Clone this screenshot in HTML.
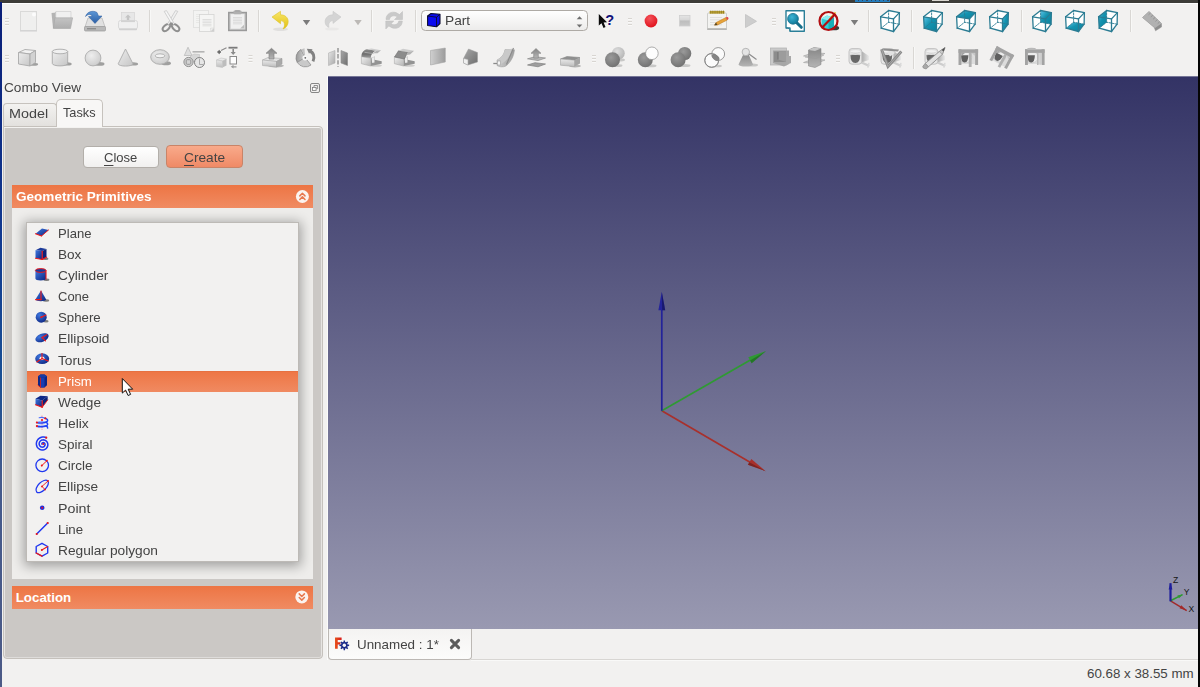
<!DOCTYPE html><html><head><meta charset="utf-8"><title>FreeCAD</title><style>
html,body{margin:0;padding:0;}
body{width:1200px;height:687px;overflow:hidden;background:#f2f1f0;position:relative;font-family:"Liberation Sans", sans-serif;font-size:13.33px;color:#444444;}
.abs{position:absolute;}
svg{position:absolute;overflow:visible;}
.t{position:absolute;white-space:nowrap;line-height:1;transform-origin:0 0;}
.t u{text-decoration-thickness:1px;text-underline-offset:2.5px;}
#view{left:328px;top:76px;width:870px;height:553px;background:linear-gradient(#333365,#9999b1);}
#panel{left:3px;top:126px;width:320px;height:533px;background:#cbc8c5;border:1px solid #c5c1bc;border-radius:1px 4px 4px 4px;box-sizing:border-box;box-shadow:inset 0 1px 0 #f3f2f0, inset -1px 0 0 #e6e4e2, inset 1px 0 0 #e6e4e2, inset 0 -1px 0 #dedcda;}
.hdr{left:12px;width:301px;height:23px;background:linear-gradient(#ed7544,#f08b62);}
#content{left:12px;top:208px;width:301px;height:371px;background:#eeedeb;overflow:hidden;}
#list{left:14px;top:14px;width:273px;height:340px;background:#f2f1f0;border:1px solid #bdbab6;box-sizing:border-box;box-shadow:0 2px 11px 2px rgba(0,0,0,.33);}
#sel{left:27px;top:371px;width:271px;height:21px;background:linear-gradient(#e26e3f 0,#ee7746 1.5px,#f08a61 100%);}
</style></head><body>
<div class="abs" style="left:0;top:0;width:1200px;height:4px;background:linear-gradient(#3d3c38 0,#3d3c38 2.5px,#a5a4a1 3px,#fefefe 3.5px,#f6f5f4 4px)"></div>
<div class="abs" style="left:855px;top:0;width:35px;height:1.2px;background:repeating-linear-gradient(90deg,#1e8de0 0,#1e8de0 3px,#2a4a6a 3px,#2a4a6a 4.2px);opacity:.8"></div><div class="abs" style="left:855px;top:1.3px;width:35px;height:.6px;background:#1e8de0;opacity:.8"></div>
<div class="abs" style="left:932px;top:0;width:17px;height:.9px;background:#d9d6d0"></div>
<div class="abs" style="left:0;top:2px;width:2px;height:685px;background:linear-gradient(#0a1e78,#123a90 35%,#1a5094 55%,#455a8c 70%,#4c5a86)"></div>
<div class="abs" style="left:1198px;top:0;width:2px;height:687px;background:#050505"></div>
<div class="abs" style="left:327px;top:76px;width:1px;height:584px;background:#fbfbfa"></div>
<div id="view" class="abs"></div>
<div class="abs" style="left:328px;top:76px;width:870px;height:1px;background:rgba(255,255,255,.33)"></div>
<svg style="left:0px;top:0px" width="1200" height="687" viewBox="0 0 1200 687"><line x1="661.8" y1="410.8" x2="751.339" y2="462.902" stroke="#a8302c" stroke-width="1.7"/><polygon points="765.6,471.2 747.9,464.834 751.32,458.957" fill="#a8302c"/><polygon points="765.6,471.2 747.9,464.834 749.409,462.241" fill="#5a1a18" opacity="0.55"/><line x1="661.8" y1="410.8" x2="751.689" y2="359.213" stroke="#2f9a33" stroke-width="1.7"/><polygon points="766,351 751.647,363.157 748.262,357.26" fill="#2f9a33"/><polygon points="766,351 751.647,363.157 750.154,360.555" fill="#1a5a1c" opacity="0.55"/><line x1="661.8" y1="410.8" x2="661.8" y2="308.3" stroke="#23239a" stroke-width="1.7"/><polygon points="661.8,291.8 665.2,310.3 658.4,310.3" fill="#23239a"/><polygon points="661.8,291.8 665.2,310.3 662.2,310.3" fill="#10104a" opacity="0.55"/></svg>
<svg style="left:0px;top:0px" width="1200" height="687" viewBox="0 0 1200 687"><line x1="1170.5" y1="600.8" x2="1186.7" y2="610.6" stroke="#a22a2a" stroke-width="1.5"/><polygon points="1186.7,610.6 1179.5,608.2 1181.3,605.3" fill="#a22a2a"/><line x1="1170.5" y1="600.8" x2="1182.5" y2="594.6" stroke="#2e9a32" stroke-width="1.6"/><polygon points="1182.8,594.4 1177.3,595.6 1179,598.3" fill="#2e9a32"/><line x1="1170.5" y1="601.3" x2="1170.5" y2="583.2" stroke="#1e1e9c" stroke-width="2.2"/><polygon points="1170.5,583 1168.6,589.5 1172.4,589.5" fill="#1e1e9c"/><text x="1172.9" y="582.9" font-family="Liberation Sans, sans-serif" font-size="8.6" fill="#161616">Z</text><text x="1183.7" y="594.8" font-family="Liberation Sans, sans-serif" font-size="8.6" fill="#161616">Y</text><text x="1188.6" y="611.6" font-family="Liberation Sans, sans-serif" font-size="8.6" fill="#161616">X</text></svg>
<svg style="left:0px;top:0px" width="1200" height="76" viewBox="0 0 1200 76"><defs>
<linearGradient id="gg" x1="0" y1="0" x2="0" y2="1"><stop offset="0" stop-color="#e9e9e9"/><stop offset="1" stop-color="#bdbdbd"/></linearGradient>
<linearGradient id="gg2" x1="0" y1="0" x2="1" y2="1"><stop offset="0" stop-color="#e6e6e6"/><stop offset="1" stop-color="#a9a9a9"/></linearGradient>
<linearGradient id="gdk" x1="0" y1="0" x2="1" y2="1"><stop offset="0" stop-color="#a8a8a8"/><stop offset="1" stop-color="#6e6e6e"/></linearGradient>
<linearGradient id="gteal" x1="0" y1="0" x2="1" y2="1"><stop offset="0" stop-color="#5cc4e6"/><stop offset="0.45" stop-color="#1493b0"/><stop offset="1" stop-color="#0b819c"/></linearGradient>
<radialGradient id="gsph" cx="0.4" cy="0.35" r="0.7"><stop offset="0" stop-color="#eeeeee"/><stop offset="1" stop-color="#cbcbcb"/></radialGradient>
<radialGradient id="gsphd" cx="0.4" cy="0.35" r="0.7"><stop offset="0" stop-color="#9a9a9a"/><stop offset="1" stop-color="#707070"/></radialGradient>
<radialGradient id="gsphl" cx="0.4" cy="0.35" r="0.7"><stop offset="0" stop-color="#dedede"/><stop offset="1" stop-color="#b4b4b4"/></radialGradient>
<radialGradient id="gred" cx="0.4" cy="0.3" r="0.7"><stop offset="0" stop-color="#f4525a"/><stop offset="1" stop-color="#e0141e"/></radialGradient>
<radialGradient id="gmag" cx="0.4" cy="0.35" r="0.7"><stop offset="0" stop-color="#3fb4d4"/><stop offset="1" stop-color="#0d7797"/></radialGradient>
<linearGradient id="gblue" x1="0" y1="0" x2="0" y2="1"><stop offset="0" stop-color="#5d97d6"/><stop offset="1" stop-color="#2c5fa5"/></linearGradient>
<linearGradient id="gyel" x1="0" y1="0" x2="0" y2="1"><stop offset="0" stop-color="#f8e66a"/><stop offset="1" stop-color="#e2c010"/></linearGradient>
<filter id="b1" x="-20%" y="-20%" width="140%" height="140%"><feGaussianBlur stdDeviation="0.6"/></filter>
</defs><defs>
<linearGradient id="gcombo" x1="0" y1="0" x2="0" y2="1"><stop offset="0" stop-color="#ffffff"/><stop offset="1" stop-color="#ecebea"/></linearGradient>
<linearGradient id="gstop" x1="0" y1="0" x2="0" y2="1"><stop offset="0" stop-color="#e4e4e4"/><stop offset="0.45" stop-color="#d6d6d6"/><stop offset="0.5" stop-color="#bdbdbd"/><stop offset="1" stop-color="#c8c8c8"/></linearGradient>
<linearGradient id="gdkv" x1="0" y1="0" x2="0" y2="1"><stop offset="0" stop-color="#858585"/><stop offset="1" stop-color="#b5b5b5"/></linearGradient>
<linearGradient id="gfold" x1="0" y1="0" x2="0" y2="1"><stop offset="0" stop-color="#c4c4c4"/><stop offset="1" stop-color="#adadad"/></linearGradient>
<linearGradient id="gface" x1="0" y1="0" x2="1" y2="1"><stop offset="0" stop-color="#efefef"/><stop offset="1" stop-color="#b4b4b4"/></linearGradient>
<linearGradient id="gband" x1="0" y1="0" x2="0" y2="1"><stop offset="0" stop-color="#8a8a8a"/><stop offset="0.55" stop-color="#6f6f6f"/><stop offset="1" stop-color="#a0a0a0"/></linearGradient>
<linearGradient id="gpie" x1="0" y1="0" x2="1" y2="0"><stop offset="0" stop-color="#9a9a9a"/><stop offset="1" stop-color="#cfcfcf"/></linearGradient>
<linearGradient id="gg2l" x1="0" y1="0" x2="1" y2="1"><stop offset="0" stop-color="#ededed"/><stop offset="1" stop-color="#c6c6c6"/></linearGradient>
<linearGradient id="gcone" x1="0" y1="0" x2="1" y2="0"><stop offset="0" stop-color="#a9a9a9"/><stop offset="1" stop-color="#e9e9e9"/></linearGradient>
<linearGradient id="gdk2" x1="0" y1="0" x2="1" y2="0"><stop offset="0" stop-color="#cfcfcf"/><stop offset="1" stop-color="#9c9c9c"/></linearGradient>
</defs><rect x="5" y="18" width="4" height="1" fill="#d8d5d1"/><rect x="5" y="19" width="4" height="1" fill="#f9f9f8"/><rect x="5" y="21" width="4" height="1" fill="#d8d5d1"/><rect x="5" y="22" width="4" height="1" fill="#f9f9f8"/><rect x="5" y="24" width="4" height="1" fill="#d8d5d1"/><rect x="5" y="25" width="4" height="1" fill="#f9f9f8"/><rect x="20.5" y="11.5" width="16" height="19" fill="#efefee" stroke="#d9d9d8" stroke-width="1"/><rect x="20" y="30.5" width="17" height="1" fill="#d0d0cf"/><circle cx="34" cy="14.5" r="2" fill="#fcfcfc"/><polygon points="51.5,13 56.5,12.5 57,27.5 53,28" fill="#b4b4b4"/><polygon points="55,12 70,12 70,27 55,27" fill="#b9b9b9"/><polygon points="55.8,11.5 71,11.5 71,19 55.8,19" fill="#f0f0f0" stroke="#c9c9c9" stroke-width="0.6"/><polygon points="55,17.8 72.6,17.8 70.5,28.5 53.3,28.5" fill="url(#gfold)" stroke="#a6a6a6" stroke-width="0.6"/><polygon points="88,18 102,18 105,27 85,27" fill="#e1e1e1" stroke="#b4b4b4" stroke-width="0.7"/><rect x="84.5" y="26.5" width="21" height="4.5" rx="1" fill="#b9b9b9" stroke="#9a9a9a" stroke-width="0.7"/><rect x="87" y="28" width="9" height="1.4" fill="#8d8d8d"/><path d="M85.5 16.5 C87 11.5 93 10 97 12.5 L98.5 16 L102 16 L95 23.5 L88.5 16.5 L92 16.3 C91.5 14 88.5 13.5 85.5 16.5 Z" fill="url(#gblue)" stroke="#2a5a9c" stroke-width="0.5"/><rect x="121.5" y="12.5" width="13" height="9" fill="#e7e7e7" stroke="#d5d5d5" stroke-width="0.7"/><polygon points="128,14.5 131,17.5 129.2,17.5 129.2,20 126.8,20 126.8,17.5 125,17.5" fill="#c4c4c4"/><rect x="118.5" y="20.5" width="19" height="8.5" rx="2" fill="#f0f0f0" stroke="#d4d4d4" stroke-width="0.8"/><rect x="121" y="20.5" width="14" height="1.6" fill="#d2d2d2"/><rect x="119" y="28.6" width="18" height="1.6" rx="0.7" fill="#d0d0d0"/><rect x="149" y="10" width="1" height="22" fill="#d9d7d4"/><rect x="150" y="10" width="1" height="22" fill="#f8f8f7"/><ellipse cx="166.3" cy="27.6" rx="2.5" ry="4.3" transform="rotate(47 166.3 27.6)" fill="none" stroke="#8f8f8f" stroke-width="2"/><ellipse cx="175.7" cy="27.6" rx="2.5" ry="4.3" transform="rotate(-47 175.7 27.6)" fill="none" stroke="#8f8f8f" stroke-width="2"/><polygon points="177.8,11.4 175.5,10.6 167.6,23.8 169.6,25.2" fill="#f0f0f0" stroke="#c2c2c2" stroke-width="0.7" stroke-linejoin="round"/><polygon points="164.2,11.4 166.5,10.6 174.4,23.8 172.4,25.2" fill="#f6f6f6" stroke="#c2c2c2" stroke-width="0.7" stroke-linejoin="round"/><path d="M170 22.5 L172.5 22.5 L173.6 25.3 L168.6 25.3 Z" fill="#8f8f8f"/><rect x="193.5" y="10.5" width="15" height="17" fill="#f3f3f2" stroke="#dededd" stroke-width="0.8"/><rect x="196" y="14" width="4" height="0.7" fill="#e2e2e1"/><rect x="196" y="16" width="4" height="0.7" fill="#e2e2e1"/><rect x="196" y="18" width="4" height="0.7" fill="#e2e2e1"/><rect x="196" y="20" width="4" height="0.7" fill="#e2e2e1"/><rect x="196" y="22" width="4" height="0.7" fill="#e2e2e1"/><rect x="199.5" y="14.5" width="14.5" height="17" fill="#f5f5f4" stroke="#d4d4d3" stroke-width="0.8"/><rect x="202.5" y="19" width="9" height="0.9" fill="#dcdcdb"/><rect x="202.5" y="20.6" width="9" height="0.9" fill="#dcdcdb"/><rect x="202.5" y="22.2" width="9" height="0.9" fill="#dcdcdb"/><rect x="202.5" y="23.8" width="9" height="0.9" fill="#dcdcdb"/><rect x="202.5" y="25.4" width="9" height="0.9" fill="#dcdcdb"/><polygon points="210.5,31.5 214,28 214,31.5" fill="#cfcfcf"/><polygon points="210.5,31.5 210.5,28 214,28" fill="#ededed" stroke="#d4d4d3" stroke-width="0.5"/><rect x="228.8" y="12.6" width="17.4" height="17.8" fill="#d6d6d6" stroke="#9a9a9a" stroke-width="1.6"/><rect x="231" y="14.2" width="13" height="14.4" fill="#f0f0f0"/><rect x="233" y="17" width="9" height="0.9" fill="#d9d9d9"/><rect x="233" y="18.6" width="9" height="0.9" fill="#d9d9d9"/><rect x="233" y="20.2" width="9" height="0.9" fill="#d9d9d9"/><rect x="233" y="21.8" width="9" height="0.9" fill="#d9d9d9"/><rect x="233" y="23.4" width="9" height="0.9" fill="#d9d9d9"/><rect x="233.5" y="10.6" width="8" height="3.6" rx="1" fill="#b0b0b0"/><rect x="235" y="10.2" width="5" height="1.4" rx="0.6" fill="#9f9f9f"/><polygon points="240.2,28.6 244,28.6 244,24.8" fill="#bdbdbd"/><rect x="258" y="10" width="1" height="22" fill="#d9d7d4"/><rect x="259" y="10" width="1" height="22" fill="#f8f8f7"/><ellipse cx="280.5" cy="29.3" rx="7.5" ry="1.8" fill="#8c8c8c" opacity="0.17" filter="url(#b1)"/><path d="M272 17 L280.5 11.3 L280.5 14.8 C286.5 14.8 289.3 19.5 287.8 24 C287 26.5 285 28.3 283 29 C285.3 26 285.3 21 280.5 20.6 L280.5 23.7 Z" fill="url(#gyel)" stroke="#dcc228" stroke-width="0.6" stroke-linejoin="round"/><polygon points="302.8,19.9 310.2,19.9 306.5,25.3" fill="#7b7b7b"/><ellipse cx="332" cy="29" rx="7" ry="1.6" fill="#8c8c8c" opacity="0.08" filter="url(#b1)"/><path d="M341 17 L333 11.3 L333 14.8 C327 14.8 324 19.5 325.5 24 C326.3 26 327.5 27 329 27.3 C328 24 329.5 20.8 333 20.6 L333 23.4 Z" fill="#d4d4d4" stroke="#c9c9c9" stroke-width="0.6" stroke-linejoin="round"/><polygon points="354.3,19.9 361.7,19.9 358,25.3" fill="#bcb9b6"/><rect x="371" y="10" width="1" height="22" fill="#d9d7d4"/><rect x="372" y="10" width="1" height="22" fill="#f8f8f7"/><path d="M386 19.5 C386 14 391 11 396 12.6 L399.5 14.5 L402.5 11.5 L402.5 19.5 L394.5 19.5 L397.3 16.8 C394 14.8 390 16 389.5 19.5 Z" fill="#c9c9c9" stroke="#bdbdbd" stroke-width="0.5"/><path d="M402.3 21 C402.3 26.5 397.3 29.5 392.3 27.9 L388.8 26 L385.8 29 L385.8 21 L393.8 21 L391 23.7 C394.3 25.7 398.3 24.5 398.8 21 Z" fill="#c9c9c9" stroke="#bdbdbd" stroke-width="0.5"/><rect x="415" y="10" width="1" height="22" fill="#d9d7d4"/><rect x="416" y="10" width="1" height="22" fill="#f8f8f7"/><rect x="421.5" y="10.5" width="166" height="20" rx="4" fill="url(#gcombo)" stroke="#aeaaa5" stroke-width="1"/><polygon points="427.6,16 431,13.5 440,14.3 440,23.5 436.5,26.8 427.6,25.5" fill="#0a0af0" stroke="#0b0b30" stroke-width="1.1" stroke-linejoin="round"/><path d="M427.6 16 L436.5 17.2 L440 14.3 M436.5 17.2 L436.5 26.8" stroke="#0b0b30" stroke-width="0.9" fill="none"/><polygon points="579.5,16.3 582.3,19.3 576.7,19.3" fill="#6e6e6e"/><polygon points="579.5,27.6 582.3,24.6 576.7,24.6" fill="#6e6e6e"/><polygon points="598.8,14 598.8,25.5 601.5,23.2 603.5,28 605.5,27 603.6,22.5 607,22.3" fill="#0a0a0a"/><text x="605.3" y="24.9" font-family="Liberation Sans, sans-serif" font-weight="bold" font-size="14.6" fill="#12127a">?</text><rect x="628" y="18" width="4" height="1" fill="#d8d5d1"/><rect x="628" y="19" width="4" height="1" fill="#f9f9f8"/><rect x="628" y="21" width="4" height="1" fill="#d8d5d1"/><rect x="628" y="22" width="4" height="1" fill="#f9f9f8"/><rect x="628" y="24" width="4" height="1" fill="#d8d5d1"/><rect x="628" y="25" width="4" height="1" fill="#f9f9f8"/><circle cx="651" cy="21" r="6.4" fill="url(#gred)"/><rect x="679.5" y="15.5" width="10.5" height="10.5" fill="url(#gstop)" stroke="#cfcfcf" stroke-width="0.8"/><rect x="707.5" y="13" width="19" height="16" rx="1" fill="#f3f3f1" stroke="#c3c3c1" stroke-width="0.8"/><rect x="707" y="28.2" width="20" height="1.8" rx="0.8" fill="#b5b5b3"/><rect x="709.5" y="11" width="15" height="2.6" fill="#c7ad3a"/><rect x="710.3" y="10.6" width="1" height="3" fill="#8e7a22"/><rect x="712.4" y="10.6" width="1" height="3" fill="#8e7a22"/><rect x="714.5" y="10.6" width="1" height="3" fill="#8e7a22"/><rect x="716.6" y="10.6" width="1" height="3" fill="#8e7a22"/><rect x="718.7" y="10.6" width="1" height="3" fill="#8e7a22"/><rect x="720.8" y="10.6" width="1" height="3" fill="#8e7a22"/><rect x="722.9" y="10.6" width="1" height="3" fill="#8e7a22"/><rect x="710" y="17" width="12" height="0.7" fill="#d6d6d4"/><rect x="710" y="19.5" width="12" height="0.7" fill="#d6d6d4"/><rect x="710" y="22" width="12" height="0.7" fill="#d6d6d4"/><rect x="710" y="24.5" width="12" height="0.7" fill="#d6d6d4"/><path d="M714.5 25.2 L716 22.6 L725.8 17.6 L727.3 20 L717.5 25 Z" fill="#e7a33a" stroke="#b8761c" stroke-width="0.5"/><path d="M725.8 17.6 L727 17 C728 16.6 729 18.4 728.2 19.3 L727.3 20 Z" fill="#e0444a"/><polygon points="714.3,25.3 716,22.6 717.5,25" fill="#5a4a2a"/><polygon points="745.5,14.5 756.5,21.3 745.5,27.5" fill="#cdcdcd" stroke="#c2c2c2" stroke-width="0.8" stroke-linejoin="round"/><rect x="772" y="18" width="4" height="1" fill="#d8d5d1"/><rect x="772" y="19" width="4" height="1" fill="#f9f9f8"/><rect x="772" y="21" width="4" height="1" fill="#d8d5d1"/><rect x="772" y="22" width="4" height="1" fill="#f9f9f8"/><rect x="772" y="24" width="4" height="1" fill="#d8d5d1"/><rect x="772" y="25" width="4" height="1" fill="#f9f9f8"/><path d="M786 10.8 L804.3 10.8 L804.3 31.2 L790 31.2 L790 28 L786 28 Z" fill="#ffffff" stroke="#2a7f98" stroke-width="1.4" stroke-linejoin="round"/><path d="M786 28 C788.5 27.6 790.2 29 790 31.2" fill="none" stroke="#2a7f98" stroke-width="1"/><line x1="796.5" y1="22.5" x2="801.3" y2="27.3" stroke="#166f8b" stroke-width="3" stroke-linecap="round"/><circle cx="793" cy="18.8" r="5.4" fill="url(#gmag)" stroke="#166f8b" stroke-width="0.8"/><ellipse cx="834" cy="28" rx="5.2" ry="2.3" fill="#1c1c1c" opacity="0.85" filter="url(#b1)"/><polygon points="821.5,18.5 827,15.5 834,17.5 834,26.5 828.5,29.5 821.5,27" fill="#2fd0d8"/><polygon points="821.5,18.5 827,15.5 834,17.5 828.5,20.5" fill="#8ceaf0"/><polygon points="828.5,20.5 834,17.5 834,26.5 828.5,29.5" fill="#19aeb9"/><line x1="829.5" y1="19" x2="835.5" y2="12.3" stroke="#e9c83a" stroke-width="1.6"/><circle cx="828.5" cy="21" r="9" fill="none" stroke="#b20f12" stroke-width="2.2"/><line x1="822.2" y1="27.4" x2="834.8" y2="14.6" stroke="#b20f12" stroke-width="2.2"/><polygon points="850.8,19.9 858.2,19.9 854.5,25.3" fill="#7b7b7b"/><rect x="868" y="10" width="1" height="22" fill="#d9d7d4"/><rect x="869" y="10" width="1" height="22" fill="#f8f8f7"/><polygon points="880.6,16.8 888.6,10.5 899.4,12.6 899.1,24.2 893.5,31.5 881.2,28.2" fill="#ffffff"/><line x1="888.6" y1="10.5" x2="888.6" y2="22.2" stroke="#2b7c93" stroke-width="0.9" stroke-linecap="round" stroke-dasharray="1.5 1.3"/><line x1="881.2" y1="28.2" x2="888.6" y2="22.2" stroke="#2b7c93" stroke-width="0.9" stroke-linecap="round" stroke-dasharray="1.5 1.3"/><line x1="888.6" y1="22.2" x2="899.1" y2="24.2" stroke="#2b7c93" stroke-width="0.9" stroke-linecap="round" stroke-dasharray="1.5 1.3"/><line x1="880.6" y1="16.8" x2="888.6" y2="10.5" stroke="#2b7c93" stroke-width="1.3" stroke-linecap="round"/><line x1="888.6" y1="10.5" x2="899.4" y2="12.6" stroke="#2b7c93" stroke-width="1.3" stroke-linecap="round"/><line x1="899.4" y1="12.6" x2="893.5" y2="18.9" stroke="#2b7c93" stroke-width="1.3" stroke-linecap="round"/><line x1="893.5" y1="18.9" x2="880.6" y2="16.8" stroke="#2b7c93" stroke-width="1.3" stroke-linecap="round"/><line x1="880.6" y1="16.8" x2="881.2" y2="28.2" stroke="#2b7c93" stroke-width="1.3" stroke-linecap="round"/><line x1="881.2" y1="28.2" x2="893.5" y2="31.5" stroke="#2b7c93" stroke-width="1.3" stroke-linecap="round"/><line x1="893.5" y1="31.5" x2="893.5" y2="18.9" stroke="#2b7c93" stroke-width="1.3" stroke-linecap="round"/><line x1="893.5" y1="31.5" x2="899.1" y2="24.2" stroke="#2b7c93" stroke-width="1.3" stroke-linecap="round"/><line x1="899.1" y1="24.2" x2="899.4" y2="12.6" stroke="#2b7c93" stroke-width="1.3" stroke-linecap="round"/><rect x="911" y="10" width="1" height="22" fill="#d9d7d4"/><rect x="912" y="10" width="1" height="22" fill="#f8f8f7"/><polygon points="923.6,16.8 931.6,10.5 942.4,12.6 942.1,24.2 936.5,31.5 924.2,28.2" fill="#ffffff"/><polygon points="923.6,16.8 936.5,18.9 936.5,31.5 924.2,28.2" fill="url(#gteal)"/><line x1="931.6" y1="10.5" x2="931.6" y2="22.2" stroke="#2b7c93" stroke-width="0.9" stroke-linecap="round" stroke-dasharray="1.5 1.3"/><line x1="924.2" y1="28.2" x2="931.6" y2="22.2" stroke="#2b7c93" stroke-width="0.9" stroke-linecap="round" stroke-dasharray="1.5 1.3"/><line x1="931.6" y1="22.2" x2="942.1" y2="24.2" stroke="#2b7c93" stroke-width="0.9" stroke-linecap="round" stroke-dasharray="1.5 1.3"/><line x1="923.6" y1="16.8" x2="931.6" y2="10.5" stroke="#2b7c93" stroke-width="1.3" stroke-linecap="round"/><line x1="931.6" y1="10.5" x2="942.4" y2="12.6" stroke="#2b7c93" stroke-width="1.3" stroke-linecap="round"/><line x1="942.4" y1="12.6" x2="936.5" y2="18.9" stroke="#2b7c93" stroke-width="1.3" stroke-linecap="round"/><line x1="936.5" y1="18.9" x2="923.6" y2="16.8" stroke="#2b7c93" stroke-width="1.3" stroke-linecap="round"/><line x1="923.6" y1="16.8" x2="924.2" y2="28.2" stroke="#2b7c93" stroke-width="1.3" stroke-linecap="round"/><line x1="924.2" y1="28.2" x2="936.5" y2="31.5" stroke="#2b7c93" stroke-width="1.3" stroke-linecap="round"/><line x1="936.5" y1="31.5" x2="936.5" y2="18.9" stroke="#2b7c93" stroke-width="1.3" stroke-linecap="round"/><line x1="936.5" y1="31.5" x2="942.1" y2="24.2" stroke="#2b7c93" stroke-width="1.3" stroke-linecap="round"/><line x1="942.1" y1="24.2" x2="942.4" y2="12.6" stroke="#2b7c93" stroke-width="1.3" stroke-linecap="round"/><polygon points="956.6,16.8 964.6,10.5 975.4,12.6 975.1,24.2 969.5,31.5 957.2,28.2" fill="#ffffff"/><polygon points="956.6,16.8 964.6,10.5 975.4,12.6 969.5,18.9" fill="url(#gteal)"/><line x1="964.6" y1="10.5" x2="964.6" y2="22.2" stroke="#2b7c93" stroke-width="0.9" stroke-linecap="round" stroke-dasharray="1.5 1.3"/><line x1="957.2" y1="28.2" x2="964.6" y2="22.2" stroke="#2b7c93" stroke-width="0.9" stroke-linecap="round" stroke-dasharray="1.5 1.3"/><line x1="964.6" y1="22.2" x2="975.1" y2="24.2" stroke="#2b7c93" stroke-width="0.9" stroke-linecap="round" stroke-dasharray="1.5 1.3"/><line x1="956.6" y1="16.8" x2="964.6" y2="10.5" stroke="#2b7c93" stroke-width="1.3" stroke-linecap="round"/><line x1="964.6" y1="10.5" x2="975.4" y2="12.6" stroke="#2b7c93" stroke-width="1.3" stroke-linecap="round"/><line x1="975.4" y1="12.6" x2="969.5" y2="18.9" stroke="#2b7c93" stroke-width="1.3" stroke-linecap="round"/><line x1="969.5" y1="18.9" x2="956.6" y2="16.8" stroke="#2b7c93" stroke-width="1.3" stroke-linecap="round"/><line x1="956.6" y1="16.8" x2="957.2" y2="28.2" stroke="#2b7c93" stroke-width="1.3" stroke-linecap="round"/><line x1="957.2" y1="28.2" x2="969.5" y2="31.5" stroke="#2b7c93" stroke-width="1.3" stroke-linecap="round"/><line x1="969.5" y1="31.5" x2="969.5" y2="18.9" stroke="#2b7c93" stroke-width="1.3" stroke-linecap="round"/><line x1="969.5" y1="31.5" x2="975.1" y2="24.2" stroke="#2b7c93" stroke-width="1.3" stroke-linecap="round"/><line x1="975.1" y1="24.2" x2="975.4" y2="12.6" stroke="#2b7c93" stroke-width="1.3" stroke-linecap="round"/><polygon points="989.6,16.8 997.6,10.5 1008.4,12.6 1008.1,24.2 1002.5,31.5 990.2,28.2" fill="#ffffff"/><polygon points="1002.5,18.9 1008.4,12.6 1008.1,24.2 1002.5,31.5" fill="url(#gteal)"/><line x1="997.6" y1="10.5" x2="997.6" y2="22.2" stroke="#2b7c93" stroke-width="0.9" stroke-linecap="round" stroke-dasharray="1.5 1.3"/><line x1="990.2" y1="28.2" x2="997.6" y2="22.2" stroke="#2b7c93" stroke-width="0.9" stroke-linecap="round" stroke-dasharray="1.5 1.3"/><line x1="997.6" y1="22.2" x2="1008.1" y2="24.2" stroke="#2b7c93" stroke-width="0.9" stroke-linecap="round" stroke-dasharray="1.5 1.3"/><line x1="989.6" y1="16.8" x2="997.6" y2="10.5" stroke="#2b7c93" stroke-width="1.3" stroke-linecap="round"/><line x1="997.6" y1="10.5" x2="1008.4" y2="12.6" stroke="#2b7c93" stroke-width="1.3" stroke-linecap="round"/><line x1="1008.4" y1="12.6" x2="1002.5" y2="18.9" stroke="#2b7c93" stroke-width="1.3" stroke-linecap="round"/><line x1="1002.5" y1="18.9" x2="989.6" y2="16.8" stroke="#2b7c93" stroke-width="1.3" stroke-linecap="round"/><line x1="989.6" y1="16.8" x2="990.2" y2="28.2" stroke="#2b7c93" stroke-width="1.3" stroke-linecap="round"/><line x1="990.2" y1="28.2" x2="1002.5" y2="31.5" stroke="#2b7c93" stroke-width="1.3" stroke-linecap="round"/><line x1="1002.5" y1="31.5" x2="1002.5" y2="18.9" stroke="#2b7c93" stroke-width="1.3" stroke-linecap="round"/><line x1="1002.5" y1="31.5" x2="1008.1" y2="24.2" stroke="#2b7c93" stroke-width="1.3" stroke-linecap="round"/><line x1="1008.1" y1="24.2" x2="1008.4" y2="12.6" stroke="#2b7c93" stroke-width="1.3" stroke-linecap="round"/><rect x="1021" y="10" width="1" height="22" fill="#d9d7d4"/><rect x="1022" y="10" width="1" height="22" fill="#f8f8f7"/><polygon points="1032.6,16.8 1040.6,10.5 1051.4,12.6 1051.1,24.2 1045.5,31.5 1033.2,28.2" fill="#ffffff"/><polygon points="1040.6,10.5 1051.4,12.6 1051.1,24.2 1040.6,22.2" fill="url(#gteal)"/><line x1="1040.6" y1="10.5" x2="1040.6" y2="22.2" stroke="#2b7c93" stroke-width="0.9" stroke-linecap="round" stroke-dasharray="1.5 1.3"/><line x1="1033.2" y1="28.2" x2="1040.6" y2="22.2" stroke="#2b7c93" stroke-width="0.9" stroke-linecap="round" stroke-dasharray="1.5 1.3"/><line x1="1040.6" y1="22.2" x2="1051.1" y2="24.2" stroke="#2b7c93" stroke-width="0.9" stroke-linecap="round" stroke-dasharray="1.5 1.3"/><line x1="1032.6" y1="16.8" x2="1040.6" y2="10.5" stroke="#2b7c93" stroke-width="1.3" stroke-linecap="round"/><line x1="1040.6" y1="10.5" x2="1051.4" y2="12.6" stroke="#2b7c93" stroke-width="1.3" stroke-linecap="round"/><line x1="1051.4" y1="12.6" x2="1045.5" y2="18.9" stroke="#2b7c93" stroke-width="1.3" stroke-linecap="round"/><line x1="1045.5" y1="18.9" x2="1032.6" y2="16.8" stroke="#2b7c93" stroke-width="1.3" stroke-linecap="round"/><line x1="1032.6" y1="16.8" x2="1033.2" y2="28.2" stroke="#2b7c93" stroke-width="1.3" stroke-linecap="round"/><line x1="1033.2" y1="28.2" x2="1045.5" y2="31.5" stroke="#2b7c93" stroke-width="1.3" stroke-linecap="round"/><line x1="1045.5" y1="31.5" x2="1045.5" y2="18.9" stroke="#2b7c93" stroke-width="1.3" stroke-linecap="round"/><line x1="1045.5" y1="31.5" x2="1051.1" y2="24.2" stroke="#2b7c93" stroke-width="1.3" stroke-linecap="round"/><line x1="1051.1" y1="24.2" x2="1051.4" y2="12.6" stroke="#2b7c93" stroke-width="1.3" stroke-linecap="round"/><polygon points="1065.6,16.8 1073.6,10.5 1084.4,12.6 1084.1,24.2 1078.5,31.5 1066.2,28.2" fill="#ffffff"/><polygon points="1066.2,28.2 1078.5,31.5 1084.1,24.2 1073.6,22.2" fill="url(#gteal)"/><line x1="1073.6" y1="10.5" x2="1073.6" y2="22.2" stroke="#2b7c93" stroke-width="0.9" stroke-linecap="round" stroke-dasharray="1.5 1.3"/><line x1="1066.2" y1="28.2" x2="1073.6" y2="22.2" stroke="#2b7c93" stroke-width="0.9" stroke-linecap="round" stroke-dasharray="1.5 1.3"/><line x1="1073.6" y1="22.2" x2="1084.1" y2="24.2" stroke="#2b7c93" stroke-width="0.9" stroke-linecap="round" stroke-dasharray="1.5 1.3"/><line x1="1065.6" y1="16.8" x2="1073.6" y2="10.5" stroke="#2b7c93" stroke-width="1.3" stroke-linecap="round"/><line x1="1073.6" y1="10.5" x2="1084.4" y2="12.6" stroke="#2b7c93" stroke-width="1.3" stroke-linecap="round"/><line x1="1084.4" y1="12.6" x2="1078.5" y2="18.9" stroke="#2b7c93" stroke-width="1.3" stroke-linecap="round"/><line x1="1078.5" y1="18.9" x2="1065.6" y2="16.8" stroke="#2b7c93" stroke-width="1.3" stroke-linecap="round"/><line x1="1065.6" y1="16.8" x2="1066.2" y2="28.2" stroke="#2b7c93" stroke-width="1.3" stroke-linecap="round"/><line x1="1066.2" y1="28.2" x2="1078.5" y2="31.5" stroke="#2b7c93" stroke-width="1.3" stroke-linecap="round"/><line x1="1078.5" y1="31.5" x2="1078.5" y2="18.9" stroke="#2b7c93" stroke-width="1.3" stroke-linecap="round"/><line x1="1078.5" y1="31.5" x2="1084.1" y2="24.2" stroke="#2b7c93" stroke-width="1.3" stroke-linecap="round"/><line x1="1084.1" y1="24.2" x2="1084.4" y2="12.6" stroke="#2b7c93" stroke-width="1.3" stroke-linecap="round"/><polygon points="1098.6,16.8 1106.6,10.5 1117.4,12.6 1117.1,24.2 1111.5,31.5 1099.2,28.2" fill="#ffffff"/><polygon points="1098.6,16.8 1106.6,10.5 1106.6,22.2 1099.2,28.2" fill="url(#gteal)"/><line x1="1106.6" y1="10.5" x2="1106.6" y2="22.2" stroke="#2b7c93" stroke-width="0.9" stroke-linecap="round" stroke-dasharray="1.5 1.3"/><line x1="1099.2" y1="28.2" x2="1106.6" y2="22.2" stroke="#2b7c93" stroke-width="0.9" stroke-linecap="round" stroke-dasharray="1.5 1.3"/><line x1="1106.6" y1="22.2" x2="1117.1" y2="24.2" stroke="#2b7c93" stroke-width="0.9" stroke-linecap="round" stroke-dasharray="1.5 1.3"/><line x1="1098.6" y1="16.8" x2="1106.6" y2="10.5" stroke="#2b7c93" stroke-width="1.3" stroke-linecap="round"/><line x1="1106.6" y1="10.5" x2="1117.4" y2="12.6" stroke="#2b7c93" stroke-width="1.3" stroke-linecap="round"/><line x1="1117.4" y1="12.6" x2="1111.5" y2="18.9" stroke="#2b7c93" stroke-width="1.3" stroke-linecap="round"/><line x1="1111.5" y1="18.9" x2="1098.6" y2="16.8" stroke="#2b7c93" stroke-width="1.3" stroke-linecap="round"/><line x1="1098.6" y1="16.8" x2="1099.2" y2="28.2" stroke="#2b7c93" stroke-width="1.3" stroke-linecap="round"/><line x1="1099.2" y1="28.2" x2="1111.5" y2="31.5" stroke="#2b7c93" stroke-width="1.3" stroke-linecap="round"/><line x1="1111.5" y1="31.5" x2="1111.5" y2="18.9" stroke="#2b7c93" stroke-width="1.3" stroke-linecap="round"/><line x1="1111.5" y1="31.5" x2="1117.1" y2="24.2" stroke="#2b7c93" stroke-width="1.3" stroke-linecap="round"/><line x1="1117.1" y1="24.2" x2="1117.4" y2="12.6" stroke="#2b7c93" stroke-width="1.3" stroke-linecap="round"/><rect x="1130" y="10" width="1" height="22" fill="#d9d7d4"/><rect x="1131" y="10" width="1" height="22" fill="#f8f8f7"/><polygon points="1142.5,17.5 1149,11.5 1161.5,23.5 1161.5,27 1155.5,30.8 1154.3,27.5" fill="#8d8d8d" stroke="#8d8d8d" stroke-width="0.5"/><polygon points="1142.5,17.5 1149,11.5 1161.5,23.5 1155,28" fill="#b1b1b1"/><line x1="1150.5" y1="13" x2="1148.5" y2="14.8" stroke="#888888" stroke-width="0.7"/><line x1="1152.8" y1="15.2" x2="1150.8" y2="17" stroke="#888888" stroke-width="0.7"/><line x1="1155.1" y1="17.4" x2="1153.1" y2="19.2" stroke="#888888" stroke-width="0.7"/><line x1="1157.4" y1="19.6" x2="1155.4" y2="21.4" stroke="#888888" stroke-width="0.7"/><line x1="1159.7" y1="21.8" x2="1157.7" y2="23.6" stroke="#888888" stroke-width="0.7"/><rect x="5" y="55" width="4" height="1" fill="#d8d5d1"/><rect x="5" y="56" width="4" height="1" fill="#f9f9f8"/><rect x="5" y="58" width="4" height="1" fill="#d8d5d1"/><rect x="5" y="59" width="4" height="1" fill="#f9f9f8"/><rect x="5" y="61" width="4" height="1" fill="#d8d5d1"/><rect x="5" y="62" width="4" height="1" fill="#f9f9f8"/><ellipse cx="33.5" cy="64.3" rx="4.6" ry="1.5" fill="#8c8c8c" opacity="0.8" filter="url(#b1)"/><polygon points="18.5,52.5 25,49.5 35.5,50.5 30,54" fill="#f1f1f1" stroke="#a9a9a9" stroke-width="0.9" stroke-linejoin="round"/><polygon points="18.5,52.5 30,54 30,66 18.5,64" fill="url(#gg2l)" stroke="#a9a9a9" stroke-width="0.9" stroke-linejoin="round"/><polygon points="30,54 35.5,50.5 35.5,62.5 30,66" fill="#d2d2d2" stroke="#a9a9a9" stroke-width="0.9" stroke-linejoin="round"/><ellipse cx="67.5" cy="63.9" rx="4.2" ry="1.6" fill="#8c8c8c" opacity="0.8" filter="url(#b1)"/><path d="M52.3 51.5 L52.3 63.5 A7.7 2.4 0 0 0 67.7 63.5 L67.7 51.5 Z" fill="url(#gg2l)" stroke="#a9a9a9" stroke-width="0.9"/><ellipse cx="60" cy="51.5" rx="7.7" ry="2.3" fill="#f0f0f0" stroke="#a9a9a9" stroke-width="0.9"/><ellipse cx="99.5" cy="63.9" rx="5" ry="1.9" fill="#8c8c8c" opacity="0.8" filter="url(#b1)"/><circle cx="93" cy="58" r="7.9" fill="url(#gsph)" stroke="#adadad" stroke-width="0.9"/><ellipse cx="133.5" cy="63.9" rx="4.6" ry="1.6" fill="#8c8c8c" opacity="0.8" filter="url(#b1)"/><path d="M125.5 49 L118.2 63.8 A7.4 2.3 0 0 0 133 63.8 Z" fill="url(#gg2l)" stroke="#adadad" stroke-width="0.9" stroke-linejoin="round"/><ellipse cx="166" cy="63.2" rx="5" ry="2" fill="#8c8c8c" opacity="0.8" filter="url(#b1)"/><ellipse cx="160" cy="57" rx="9.3" ry="7.3" fill="url(#gsph)" stroke="#a9a9a9" stroke-width="0.9"/><ellipse cx="160" cy="55.8" rx="4.8" ry="2" fill="#f3f3f3" stroke="#a9a9a9" stroke-width="0.9"/><path d="M188 47.2 L184.3 55.5 L192 55.5 Z" fill="#dedede" stroke="#b4b4b4" stroke-width="0.7"/><rect x="192.5" y="51" width="12" height="1.6" fill="#b4b4b4"/><polygon points="190.5,56 194,54 199.5,54.5 199.5,62 190.5,62" fill="#d6d6d6" stroke="#bdbdbd" stroke-width="0.6"/><circle cx="188.5" cy="62" r="4.6" fill="#d3d3d3" stroke="#8f8f8f" stroke-width="1"/><rect x="186.2" y="59.7" width="4.6" height="4.6" rx="1" fill="none" stroke="#8f8f8f" stroke-width="0.9"/><circle cx="199.5" cy="62.5" r="5" fill="#e6e6e6" stroke="#777" stroke-width="0.9"/><path d="M199.5 58.5 L199.5 64.5 L203.5 64.5" stroke="#9a9a9a" stroke-width="0.8" fill="none"/><rect x="228.5" y="46.8" width="9" height="1.8" fill="#7b7b7b"/><polygon points="234,49 234,52 235.8,52 233.2,55 230.6,52 232.4,52 232.4,49" fill="#8b8b8b"/><rect x="230" y="56.5" width="6.5" height="7.5" fill="#fdfdfd" stroke="#8a8a8a" stroke-width="1"/><polygon points="233.5,64.8 233.5,66.2 236.5,66.2 236.5,67.5 233.5,67.5 233.5,68.6 230.8,66.8" fill="#9a9a9a"/><polygon points="217.5,52 219.2,50.5 220.8,52 219.2,53.6" fill="#666" stroke="#666" stroke-width="1"/><line x1="221" y1="50.5" x2="226.5" y2="47.8" stroke="#8a8a8a" stroke-width="1.2"/><polygon points="216.5,60 221,58 226.5,59 222.5,61" fill="#e8e8e8" stroke="#bdbdbd" stroke-width="0.5"/><polygon points="216.5,60 222.5,61 222.5,67.5 216.5,66.5" fill="url(#gg)" stroke="#bdbdbd" stroke-width="0.5"/><polygon points="222.5,61 226.5,59 226.5,65.5 222.5,67.5" fill="#bdbdbd"/><rect x="248.5" y="55" width="4" height="1" fill="#d8d5d1"/><rect x="248.5" y="56" width="4" height="1" fill="#f9f9f8"/><rect x="248.5" y="58" width="4" height="1" fill="#d8d5d1"/><rect x="248.5" y="59" width="4" height="1" fill="#f9f9f8"/><rect x="248.5" y="61" width="4" height="1" fill="#d8d5d1"/><rect x="248.5" y="62" width="4" height="1" fill="#f9f9f8"/><ellipse cx="276" cy="65.8" rx="8" ry="1.6" fill="#8c8c8c" opacity="0.6" filter="url(#b1)"/><polygon points="262.5,60 268,57.5 282,58.5 276.5,61.5" fill="#e3e3e3" stroke="#a9a9a9" stroke-width="0.6"/><polygon points="262.5,60 276.5,61.5 276.5,67 262.5,65.5" fill="url(#gg)" stroke="#a9a9a9" stroke-width="0.6"/><polygon points="276.5,61.5 282,58.5 282,64 276.5,67" fill="#a9a9a9" stroke="#a0a0a0" stroke-width="0.6"/><polygon points="271.5,48.3 277,53.3 274,53.3 274,59 269,59 269,53.3 266,53.3" fill="url(#gdkv)" stroke="#7d7d7d" stroke-width="0.6" stroke-linejoin="round"/><path d="M305 57.5 L301 49.5 A9.5 9.5 0 0 0 297.3 62.5 Z" fill="url(#gpie)" stroke="#878787" stroke-width="0.9"/><path d="M305 57.5 L297.3 62.5 A9.5 9.5 0 0 0 311 65 Z" fill="#c9c9c9" stroke="#9b9b9b" stroke-width="0.9"/><path d="M305 57.5 L301 49.5 L304.5 48.3 L305 55 Z" fill="#c2c2c2"/><circle cx="305" cy="57.8" r="2.6" fill="#f7f7f7"/><circle cx="305.3" cy="57.8" r="0.9" fill="#666"/><path d="M309.6 51 C313.6 52.3 315 57 313 61.3" stroke="#828282" stroke-width="2.9" fill="none"/><polygon points="306.8,48.8 312.6,49.3 309,53.8" fill="#828282"/><polygon points="328.5,53 335,50.5 335,63 328.5,65.5" fill="url(#gg2)" stroke="#b0b0b0" stroke-width="0.6"/><polygon points="341,50.5 347.5,53 347.5,65.5 341,63" fill="url(#gdk)" stroke="#8c8c8c" stroke-width="0.6"/><line x1="338" y1="48" x2="338" y2="67" stroke="#9c9c9c" stroke-width="1.6" stroke-dasharray="4.4 1.7"/><ellipse cx="376" cy="65.6" rx="6" ry="1.2" fill="#8c8c8c" opacity="0.35" filter="url(#b1)"/><polygon points="370.7,58.1 370.7,66.1 381.7,63.7 381.7,61.2 374.6,59.8 374.6,56.5" fill="#939393"/><polygon points="371.5,57.5 374.5,57 374.5,62.4 372.2,63" fill="#ececec"/><polygon points="361.4,56.7 370.7,58.1 370.7,66.1 361.4,63.7" fill="url(#gface)" stroke="#a0a0a0" stroke-width="0.5" stroke-linejoin="round"/><path d="M361.4 56.7 C361.5 52 364 50 367 49.3 L376.5 50.8 C373 51.5 371 54 370.7 58.1 Z" fill="url(#gband)"/><polygon points="367,49.3 371.5,48.4 381,50.2 376.5,50.8" fill="#cdcdcd"/><polygon points="376.5,50.8 381,50.2 377.5,53.2 373,53.3" fill="#b3b3b3"/><path d="M364.5 52.3 L373.5 53.6" stroke="#b4b4b4" stroke-width="0.8"/><ellipse cx="409" cy="65.6" rx="6" ry="1.2" fill="#8c8c8c" opacity="0.35" filter="url(#b1)"/><polygon points="403.7,58.1 403.7,66.1 414.7,63.7 414.7,61.2 407.6,59.8 407.6,56.5" fill="#939393"/><polygon points="404.5,57.5 407.5,57 407.5,62.4 405.2,63" fill="#ececec"/><polygon points="394.4,56.7 403.7,58.1 403.7,66.1 394.4,63.7" fill="url(#gface)" stroke="#a0a0a0" stroke-width="0.5" stroke-linejoin="round"/><polygon points="394.5,57 398.5,50.8 407.8,52 404.3,59" fill="#8c8c8c" stroke="#6f6f6f" stroke-width="0.6" stroke-linejoin="round"/><polygon points="398.5,50.8 403,48.8 414,50.7 407.8,52" fill="#cdcdcd"/><polygon points="407.8,52 414,50.7 410,54.5 406.5,55" fill="#b3b3b3"/><polygon points="430.5,50.5 445.3,48 445.3,62 430.5,65" fill="url(#gdk2)" stroke="#a4a4a4" stroke-width="0.6"/><polygon points="468.5,49 477.5,52.5 477.5,62 468,65 463.5,63 463.5,58.5" fill="url(#gdk)" stroke="#9a9a9a" stroke-width="0.5"/><polygon points="463.5,58.5 468,59.5 468,65 463.5,63" fill="#f0f0f0" stroke="#a9a9a9" stroke-width="0.6"/><path d="M505 49.5 C504 55 501 58 497 60 L497 65.5 C499 67 503 67.5 506 66 C511 62 514 56 514.5 49.8 Z" fill="url(#gdk2)" stroke="#9c9c9c" stroke-width="0.5"/><path d="M505 49.5 L512 48.7 C511 56 506 61.5 501 64 L497 60 C501 58 504 55 505 49.5Z" fill="#c9c9c9"/><line x1="513.5" y1="48" x2="506.5" y2="64.5" stroke="#8b8b8b" stroke-width="1.1"/><rect x="497.3" y="61" width="3.4" height="4" fill="#f4f4f4" stroke="#999" stroke-width="0.6"/><line x1="493.3" y1="63.5" x2="497" y2="63.5" stroke="#8b8b8b" stroke-width="1.3"/><polygon points="527.5,65 535,62.7 545.5,64 538,66.8" fill="#9e9e9e" stroke="#7f7f7f" stroke-width="0.7"/><polygon points="527.5,58.8 535,56.7 545.5,58 538,60.6" fill="#b4b4b4" stroke="#8b8b8b" stroke-width="0.7"/><polygon points="536,48.5 541,53.3 538.3,53.3 538.3,58 533.7,58 533.7,53.3 531,53.3" fill="url(#gdkv)" stroke="#858585" stroke-width="0.6" stroke-linejoin="round"/><ellipse cx="575" cy="66" rx="6" ry="1.5" fill="#8c8c8c" opacity="0.6" filter="url(#b1)"/><polygon points="560.5,59 567,56.5 580,57.5 574.5,60.2" fill="#8f8f8f" stroke="#8a8a8a" stroke-width="0.6"/><polygon points="560.5,59 574.5,60.2 574.5,66.5 560.5,65.2" fill="url(#gg)" stroke="#a4a4a4" stroke-width="0.6"/><polygon points="574.5,60.2 580,57.5 580,63.5 574.5,66.5" fill="#a4a4a4"/><rect x="592" y="55" width="4" height="1" fill="#d8d5d1"/><rect x="592" y="56" width="4" height="1" fill="#f9f9f8"/><rect x="592" y="58" width="4" height="1" fill="#d8d5d1"/><rect x="592" y="59" width="4" height="1" fill="#f9f9f8"/><rect x="592" y="61" width="4" height="1" fill="#d8d5d1"/><rect x="592" y="62" width="4" height="1" fill="#f9f9f8"/><ellipse cx="621" cy="60" rx="4" ry="1.4" fill="#8c8c8c" opacity="0.4" filter="url(#b1)"/><circle cx="618.3" cy="53.3" r="6.4" fill="url(#gsphl)"/><ellipse cx="617" cy="65.5" rx="5.5" ry="1.5" fill="#8c8c8c" opacity="0.4" filter="url(#b1)"/><circle cx="612.5" cy="59.7" r="7.5" fill="url(#gsphd)"/><ellipse cx="651" cy="65.8" rx="5.5" ry="1.5" fill="#8c8c8c" opacity="0.4" filter="url(#b1)"/><circle cx="645.3" cy="59.7" r="7.5" fill="url(#gsphd)"/><circle cx="651.9" cy="53.3" r="6.3" fill="#fdfdfd" stroke="#8c8c8c" stroke-width="0.7"/><ellipse cx="685" cy="65.5" rx="5.5" ry="1.5" fill="#8c8c8c" opacity="0.4" filter="url(#b1)"/><circle cx="684.7" cy="53.5" r="6.6" fill="url(#gsphd)"/><circle cx="678.1" cy="59.7" r="7.5" fill="url(#gsphd)"/><ellipse cx="717" cy="66" rx="5" ry="1.3" fill="#8c8c8c" opacity="0.4" filter="url(#b1)"/><circle cx="711.7" cy="60.4" r="6.9" fill="#fbfbfb" stroke="#808080" stroke-width="0.8"/><circle cx="718.2" cy="54" r="6.4" fill="#fbfbfb" stroke="#808080" stroke-width="0.8"/><path d="M712.3 55.8 A6.4 6.4 0 0 0 718.4 60.3 A6.9 6.9 0 0 0 712.3 55.8Z" fill="#8a8a8a" transform="rotate(0)"/><ellipse cx="715.6" cy="57.4" rx="4.4" ry="2.6" transform="rotate(40 715.6 57.4)" fill="#858585"/><circle cx="711.7" cy="60.4" r="6.9" fill="none" stroke="#808080" stroke-width="0.8"/><ellipse cx="753" cy="65" rx="5" ry="1.5" fill="#8c8c8c" opacity="0.4" filter="url(#b1)"/><path d="M744 53 L738.5 64.5 A7 2 0 0 0 753 64.5 L748 53 Z" fill="url(#gdkv)"/><circle cx="745.8" cy="52" r="3.7" fill="#e4e4e4" stroke="#b0b0b0" stroke-width="0.9"/><line x1="749" y1="54" x2="756.5" y2="59.5" stroke="#8b8b8b" stroke-width="1.1"/><rect x="770.5" y="48" width="16" height="17" fill="#c9c9c9" stroke="#b4b4b4" stroke-width="0.8"/><polygon points="773,50.5 789,50.5 789,64 784,66.5 773,63" fill="#a6a6a6"/><polygon points="774,51.5 786,51.5 786,62 774,62" fill="#8c8c8c"/><polygon points="778,52 786,51.5 786,62 778,59.5" fill="#9c9c9c"/><line x1="778" y1="52" x2="778" y2="59.5" stroke="#6a6a6a" stroke-width="0.8"/><polygon points="786.5,56 791,56 791,63 786.5,65" fill="#a9a9a9"/><polygon points="803.5,56 813,52.5 825,53.5 816,57.3" fill="#c8c8c8" stroke="#9a9a9a" stroke-width="0.6" opacity="0.9"/><polygon points="803.5,62.5 813,59 825,60 816,63.8" fill="#c8c8c8" stroke="#9a9a9a" stroke-width="0.6" opacity="0.9"/><polygon points="808.5,50 814,47.5 821,48.5 821,64.5 815,67.5 808.5,66" fill="url(#gdkv)" stroke="#7c7c7c" stroke-width="0.5"/><polygon points="808.5,50 814,47.5 821,48.5 815,51" fill="#c6c6c6"/><path d="M805 57 L816 58.5 L824 55" stroke="#9a9a9a" stroke-width="0.7" fill="none"/><rect x="836" y="55" width="4" height="1" fill="#d8d5d1"/><rect x="836" y="56" width="4" height="1" fill="#f9f9f8"/><rect x="836" y="58" width="4" height="1" fill="#d8d5d1"/><rect x="836" y="59" width="4" height="1" fill="#f9f9f8"/><rect x="836" y="61" width="4" height="1" fill="#d8d5d1"/><rect x="836" y="62" width="4" height="1" fill="#f9f9f8"/><polygon points="861.4,51 869,56 869,60 861.4,62.5" fill="url(#gcone)"/><line x1="861" y1="62.2" x2="868.3" y2="65.6" stroke="#cdcdcd" stroke-width="2.2" stroke-linecap="round"/><line x1="868.8" y1="63.5" x2="868" y2="67" stroke="#d9d9d9" stroke-width="1.6" stroke-linecap="round"/><rect x="849" y="48.6" width="12.8" height="15.6" rx="3" fill="#e6e6e6" stroke="#bdbdbd" stroke-width="0.9"/><ellipse cx="855.4" cy="51.3" rx="5.6" ry="1.7" fill="#f1f1f1" stroke="#cfcfcf" stroke-width="0.6"/><path d="M850.4 55 L860.2 55 Q860 63.2 855.3 63 Q850.6 63 850.4 55 Z" fill="#686868"/><path d="M850.4 55 Q855.3 52.8 860.2 55" fill="none" stroke="#c4c4c4" stroke-width="0.7"/><polygon points="893.4,51 901,56 901,60 893.4,62.5" fill="url(#gcone)"/><line x1="893" y1="62.2" x2="900.3" y2="65.6" stroke="#cdcdcd" stroke-width="2.2" stroke-linecap="round"/><line x1="900.8" y1="63.5" x2="900" y2="67" stroke="#d9d9d9" stroke-width="1.6" stroke-linecap="round"/><rect x="881" y="48.6" width="12.8" height="15.6" rx="3" fill="#e6e6e6" stroke="#bdbdbd" stroke-width="0.9"/><ellipse cx="887.4" cy="51.3" rx="5.6" ry="1.7" fill="#f1f1f1" stroke="#cfcfcf" stroke-width="0.6"/><path d="M882.4 55 L892.2 55 Q892 63.2 887.3 63 Q882.6 63 882.4 55 Z" fill="#686868"/><path d="M882.4 55 Q887.3 52.8 892.2 55" fill="none" stroke="#c4c4c4" stroke-width="0.7"/><path d="M881.5 49.2 L888 66.5 L901.3 51.5" stroke="#8b8b8b" stroke-width="2.8" fill="none" stroke-linejoin="miter"/><path d="M881.5 49.2 L888 66.5 L901.3 51.5" stroke="#b0b0b0" stroke-width="0.8" fill="none"/><polygon points="887,52 892,49.5 895,53 890,56.5" fill="#e2e2e2"/><polygon points="882.5,48.6 899,49.5 898,51.5 884,50.5" fill="#8f8f8f"/><rect x="913" y="47" width="1" height="22" fill="#d9d7d4"/><rect x="914" y="47" width="1" height="22" fill="#f8f8f7"/><polygon points="937.4,51 945,56 945,60 937.4,62.5" fill="url(#gcone)"/><line x1="937" y1="62.2" x2="944.3" y2="65.6" stroke="#cdcdcd" stroke-width="2.2" stroke-linecap="round"/><line x1="944.8" y1="63.5" x2="944" y2="67" stroke="#d9d9d9" stroke-width="1.6" stroke-linecap="round"/><rect x="925" y="48.6" width="12.8" height="15.6" rx="3" fill="#e6e6e6" stroke="#bdbdbd" stroke-width="0.9"/><ellipse cx="931.4" cy="51.3" rx="5.6" ry="1.7" fill="#f1f1f1" stroke="#cfcfcf" stroke-width="0.6"/><path d="M926.4 55 L936.2 55 Q936 63.2 931.3 63 Q926.6 63 926.4 55 Z" fill="#686868"/><path d="M926.4 55 Q931.3 52.8 936.2 55" fill="none" stroke="#c4c4c4" stroke-width="0.7"/><path d="M925.2 63.5 L939.3 51.5 L945 47.6 L942.3 54.5 L928.4 66.8 Z" fill="#e1e1e1" stroke="#8a8a8a" stroke-width="0.8" stroke-linejoin="round"/><polygon points="939.3,51.5 945,47.6 942.3,54.5" fill="#c9c9c9" stroke="#8a8a8a" stroke-width="0.6"/><polygon points="941.6,49.9 945,47.6 943.6,51.4" fill="#4c4c4c"/><path d="M925.2 63.5 L928.4 66.8 L926.2 69 Q922.2 68.5 922.8 66.3 Z" fill="#a9a9a9" stroke="#8a8a8a" stroke-width="0.7"/><g transform="rotate(0 967.5 57.5)"><rect x="961" y="52.5" width="14" height="11.5" fill="#dcdcdc"/><ellipse cx="965.6" cy="57.2" rx="6.2" ry="5.6" fill="#ececec" stroke="#c6c6c6" stroke-width="0.7"/><path d="M960.9 55.3 L968.4 55.3 Q968.2 62.6 964.6 62.4 Q961 62.4 960.9 55.3 Z" fill="#5f5f5f"/><rect x="958.5" y="49.3" width="19.6" height="3.6" fill="#a3a3a3"/><rect x="958.5" y="49.3" width="2.9" height="15.7" fill="#a3a3a3"/><rect x="975.1" y="49.3" width="3" height="15.7" fill="#a3a3a3"/><rect x="968.8" y="53" width="2.8" height="14" fill="#b0b0b0"/><polygon points="961.4,52.9 965,52.9 961.4,56" fill="#a3a3a3"/><polygon points="975.1,52.9 971.6,52.9 975.1,56" fill="#c6c6c6"/></g><g transform="rotate(28 1001 57.5)"><rect x="994.5" y="52.5" width="14" height="11.5" fill="#dcdcdc"/><ellipse cx="999.1" cy="57.2" rx="6.2" ry="5.6" fill="#ececec" stroke="#c6c6c6" stroke-width="0.7"/><path d="M994.4 55.3 L1001.9 55.3 Q1001.7 62.6 998.1 62.4 Q994.5 62.4 994.4 55.3 Z" fill="#5f5f5f"/><rect x="992" y="49.3" width="19.6" height="3.6" fill="#a3a3a3"/><rect x="992" y="49.3" width="2.9" height="15.7" fill="#a3a3a3"/><rect x="1008.6" y="49.3" width="3" height="15.7" fill="#a3a3a3"/><rect x="1002.3" y="53" width="2.8" height="14" fill="#b0b0b0"/><polygon points="994.9,52.9 998.5,52.9 994.9,56" fill="#a3a3a3"/><polygon points="1008.6,52.9 1005.1,52.9 1008.6,56" fill="#c6c6c6"/></g><g transform="rotate(0 1034 57.5)"><rect x="1027.5" y="52.5" width="14" height="11.5" fill="#dcdcdc"/><ellipse cx="1032.1" cy="57.2" rx="6.2" ry="5.6" fill="#ececec" stroke="#c6c6c6" stroke-width="0.7"/><path d="M1027.4 55.3 L1034.9 55.3 Q1034.7 62.6 1031.1 62.4 Q1027.5 62.4 1027.4 55.3 Z" fill="#5f5f5f"/><rect x="1025" y="49.3" width="19.6" height="3.6" fill="#a3a3a3"/><rect x="1025" y="49.3" width="2.9" height="15.7" fill="#a3a3a3"/><rect x="1041.6" y="49.3" width="3" height="15.7" fill="#a3a3a3"/><rect x="1037" y="53" width="1.6" height="12" fill="#b9b9b9"/><rect x="1039.5" y="53" width="1.2" height="12" fill="#c9c9c9"/><ellipse cx="1031.5" cy="48.9" rx="4.5" ry="1.2" fill="#b9b9b9"/></g></svg>
<div class="t" style="left:444.60px;top:14.02px;font-size:13.33px;transform:scaleX(1.0305);">Part</div>
<div class="t" style="left:3.80px;top:81.12px;font-size:13.33px;transform:scaleX(1.0235);">Combo View</div>
<svg style="left:0px;top:0px" width="340" height="100" viewBox="0 0 340 100"><rect x="310.5" y="83.5" width="9" height="9" rx="1.5" fill="none" stroke="#7a7a7a" stroke-width="0.9"/><rect x="312.5" y="87.5" width="3.6" height="3" fill="#fdfdfd" stroke="#7a7a7a" stroke-width="0.8"/><path d="M314 87 L314 85.5 L317.6 85.5 L317.6 88.6 L316.5 88.6" fill="none" stroke="#7a7a7a" stroke-width="0.8"/></svg>
<div class="abs" style="left:3px;top:102.5px;width:54px;height:24.5px;border:1px solid #c6c2bd;border-bottom:none;border-radius:4px 4px 0 0;background:linear-gradient(#f3f2f0,#e2e0dd);box-sizing:border-box"></div>
<div class="t" style="left:9.30px;top:106.92px;font-size:13.33px;transform:scaleX(1.0768);">Model</div>
<div id="panel" class="abs"></div>
<div class="abs" style="left:56px;top:99px;width:47px;height:28px;border:1px solid #c6c2bd;border-bottom:none;border-radius:5px 5px 0 0;background:#f8f7f6;box-sizing:border-box"></div>
<div class="t" style="left:63.20px;top:106.22px;font-size:13.33px;transform:scaleX(0.9566);">Tasks</div>
<div class="abs" style="left:83.3px;top:145.6px;width:75.6px;height:22.4px;border-radius:4px;box-sizing:border-box;background:linear-gradient(#ffffff,#f1f0ef);border:1px solid #b3afaa;"></div>
<div class="t" style="left:104.20px;top:150.52px;font-size:13.33px;transform:scaleX(0.9772);"><u>C</u>lose</div>
<div class="abs" style="left:166px;top:145px;width:77px;height:23px;border-radius:4px;box-sizing:border-box;background:linear-gradient(#f9aa8b,#ef8a66);border:1px solid #c98468;"></div>
<div class="t" style="left:184.00px;top:150.52px;font-size:13.33px;transform:scaleX(1.0271);"><u>C</u>reate</div>
<div class="abs hdr" style="top:185px"></div>
<div class="t" style="left:15.70px;top:189.92px;font-size:13.33px;font-weight:bold;color:#fff;transform:scaleX(1.0162);">Geometric Primitives</div>
<svg style="left:0px;top:0px" width="340" height="687" viewBox="0 0 340 687"><circle cx="302.4" cy="196.5" r="6.5" fill="#fbf3ef"/><path d="M299.8 195.9 L302.4 193.3 L305 195.9 M299.8 199.5 L302.4 196.9 L305 199.5" stroke="#e8794f" stroke-width="1.5" fill="none" stroke-linecap="round" stroke-linejoin="round"/></svg>
<div id="content" class="abs"><div id="list" class="abs"></div></div>
<div id="sel" class="abs"></div>
<div class="t" style="left:57.90px;top:226.82px;font-size:13.33px;transform:scaleX(0.9826);">Plane</div>
<div class="t" style="left:57.90px;top:247.95px;font-size:13.33px;transform:scaleX(1.0188);">Box</div>
<div class="t" style="left:57.90px;top:269.08px;font-size:13.33px;transform:scaleX(1.0309);">Cylinder</div>
<div class="t" style="left:57.90px;top:290.21px;font-size:13.33px;transform:scaleX(0.9757);">Cone</div>
<div class="t" style="left:57.90px;top:311.34px;font-size:13.33px;transform:scaleX(0.9934);">Sphere</div>
<div class="t" style="left:57.90px;top:332.47px;font-size:13.33px;transform:scaleX(1.0375);">Ellipsoid</div>
<div class="t" style="left:57.90px;top:353.60px;font-size:13.33px;transform:scaleX(1.0309);">Torus</div>
<div class="t" style="left:57.90px;top:374.73px;font-size:13.33px;color:#ffffff;transform:scaleX(0.9952);">Prism</div>
<div class="t" style="left:57.90px;top:395.86px;font-size:13.33px;transform:scaleX(1.0238);">Wedge</div>
<div class="t" style="left:57.90px;top:416.99px;font-size:13.33px;transform:scaleX(1.0397);">Helix</div>
<div class="t" style="left:57.90px;top:438.12px;font-size:13.33px;transform:scaleX(1.0124);">Spiral</div>
<div class="t" style="left:57.90px;top:459.25px;font-size:13.33px;transform:scaleX(1.0128);">Circle</div>
<div class="t" style="left:57.90px;top:480.38px;font-size:13.33px;transform:scaleX(1.0238);">Ellipse</div>
<div class="t" style="left:57.90px;top:501.51px;font-size:13.33px;transform:scaleX(1.0694);">Point</div>
<div class="t" style="left:57.90px;top:522.64px;font-size:13.33px;transform:scaleX(0.9959);">Line</div>
<div class="t" style="left:57.90px;top:543.77px;font-size:13.33px;transform:scaleX(1.0301);">Regular polygon</div>
<svg style="left:0px;top:0px" width="340" height="687" viewBox="0 0 340 687"><defs><linearGradient id="pb" x1="0" y1="0" x2="1" y2="1"><stop offset="0" stop-color="#3f78e0"/><stop offset="1" stop-color="#0c2480"/></linearGradient><radialGradient id="pbs" cx="0.35" cy="0.3" r="0.8"><stop offset="0" stop-color="#3f78e0"/><stop offset="1" stop-color="#0c2480"/></radialGradient><filter id="pbl" x="-30%" y="-30%" width="160%" height="160%"><feGaussianBlur stdDeviation="0.5"/></filter></defs><polygon points="35.5,233.8 42,228.5 48.6,229.9 41.6,235.9" fill="url(#pb)"/><line x1="35.5" y1="233.8" x2="41.6" y2="235.9" stroke="#f01818" stroke-width="1.1" stroke-linecap="round"/><line x1="41.6" y1="235.9" x2="48.6" y2="229.9" stroke="#f01818" stroke-width="0.9" stroke-linecap="round"/><ellipse cx="45.5" cy="258.8" rx="3" ry="1.2" fill="#303030" opacity="0.6" filter="url(#pbl)"/><polygon points="35.5,250.3 40.4,247.8 46.5,249 42.2,251.1" fill="#1c3a9a"/><polygon points="35.5,250.3 42.2,251.1 42.2,259.5 35.5,258.2" fill="url(#pb)"/><polygon points="42.2,251.1 46.5,249 46.5,257 42.2,259.5" fill="#0c2278"/><line x1="42.2" y1="251.3" x2="42.2" y2="259.5" stroke="#f01818" stroke-width="1.1" stroke-linecap="round"/><line x1="35.5" y1="258.2" x2="42.2" y2="259.5" stroke="#f01818" stroke-width="1.1" stroke-linecap="round"/><line x1="42.2" y1="259.5" x2="46.5" y2="257.2" stroke="#f01818" stroke-width="1.1" stroke-linecap="round"/><ellipse cx="46.5" cy="279.8" rx="3" ry="1.3" fill="#303030" opacity="0.6" filter="url(#pbl)"/><path d="M35.4 270.5 L35.4 278.6 A5.3 1.9 0 0 0 46 278.6 L46 270.5 Z" fill="url(#pb)"/><ellipse cx="40.7" cy="270.5" rx="5.3" ry="1.9" fill="#1a3a9c" stroke="#f01818" stroke-width="1"/><line x1="46" y1="270.8" x2="46" y2="279" stroke="#f01818" stroke-width="1.1" stroke-linecap="round"/><ellipse cx="46" cy="300.5" rx="3.2" ry="1.2" fill="#303030" opacity="0.6" filter="url(#pbl)"/><path d="M41 290.4 L35.4 299.6 A5.5 1.9 0 0 0 46.2 299.6 Z" fill="url(#pb)"/><line x1="41" y1="291" x2="41" y2="299.6" stroke="#f01818" stroke-width="1.1" stroke-linecap="round"/><line x1="35.6" y1="299.6" x2="41" y2="299.6" stroke="#f01818" stroke-width="1.1" stroke-linecap="round"/><ellipse cx="46" cy="321.3" rx="2.6" ry="1.2" fill="#303030" opacity="0.6" filter="url(#pbl)"/><circle cx="41.2" cy="317.2" r="5.5" fill="url(#pbs)"/><line x1="41.2" y1="317.2" x2="46" y2="315" stroke="#f01818" stroke-width="1.1" stroke-linecap="round"/><circle cx="41.2" cy="317.2" r="0.9" fill="#f01818"/><ellipse cx="42" cy="337.7" rx="7" ry="4" transform="rotate(-22 42 337.7)" fill="url(#pbs)"/><line x1="42" y1="337.5" x2="46.8" y2="334.8" stroke="#f01818" stroke-width="1.1" stroke-linecap="round"/><line x1="42" y1="337.5" x2="45.5" y2="340.8" stroke="#f01818" stroke-width="1.1" stroke-linecap="round"/><ellipse cx="42.2" cy="358.7" rx="7" ry="5.4" fill="url(#pbs)"/><ellipse cx="42" cy="358.2" rx="2.5" ry="1.6" fill="#f6f3f1"/><line x1="42" y1="358.6" x2="42" y2="353.5" stroke="#f01818" stroke-width="1.1" stroke-linecap="round"/><line x1="42" y1="358.6" x2="36.8" y2="362" stroke="#f01818" stroke-width="1.1" stroke-linecap="round"/><line x1="42" y1="358.6" x2="48.3" y2="361" stroke="#f01818" stroke-width="1.1" stroke-linecap="round"/><path d="M38 376.2 L38 385.2 L40.5 387.4 L44.5 387.4 L47 385.2 L47 376.2 L44.5 374.4 L40.5 374.4 Z" fill="#0f2686"/><path d="M38 376.2 L40.5 377.8 L44.5 377.8 L47 376.2 L44.5 374.4 L40.5 374.4 Z" fill="#1b3aa2"/><path d="M40.5 377.8 L44.5 377.8 L44.5 387.4 L40.5 387.4 Z" fill="#1a3cb0"/><line x1="40.5" y1="378" x2="40.5" y2="387.2" stroke="#d02020" stroke-width="0.9" stroke-linecap="round"/><line x1="38" y1="385.2" x2="40.5" y2="387.4" stroke="#d02020" stroke-width="0.9" stroke-linecap="round"/><polygon points="35.5,398.7 40.4,395.7 47.7,396.3 42.2,400.6" fill="#0f2888"/><polygon points="35.5,398.7 42.2,400.6 42.2,407.3 35.5,404.8" fill="url(#pb)"/><polygon points="42.2,400.6 47.7,396.3 47.7,400 42.2,407.3" fill="#0c2278"/><line x1="35.5" y1="404.8" x2="42.2" y2="407.3" stroke="#f01818" stroke-width="1.1" stroke-linecap="round"/><line x1="42.2" y1="400.8" x2="42.2" y2="407.3" stroke="#f01818" stroke-width="1.1" stroke-linecap="round"/><line x1="42.2" y1="407.3" x2="47.7" y2="400" stroke="#f01818" stroke-width="0.9" stroke-linecap="round"/><line x1="42" y1="415.6" x2="42" y2="430" stroke="#ff9a9a" stroke-width="1.1" stroke-dasharray="2.4 1"/><path d="M36.9 422.6 C38 421.3 42 420.9 46.2 422.2 M36.9 426.2 C38 424.9 42 424.6 46.2 425.8" fill="none" stroke="#7d99ff" stroke-width="0.9" stroke-linecap="round"/><path d="M45.4 418.4 C43 417.4 40.5 417.3 39.2 417.7" fill="none" stroke="#4a6cff" stroke-width="1.2" stroke-linecap="round"/><path d="M36.9 422.6 C40 423.5 45 423.1 47 421.6 C48.3 420.6 47.6 419 45.4 418.4" fill="none" stroke="#2040f4" stroke-width="1.5" stroke-linecap="round"/><path d="M36.9 426.2 C40 427.2 45 426.8 47 425.3 C48.2 424.3 47.6 423 46.2 422.4" fill="none" stroke="#2040f4" stroke-width="1.5" stroke-linecap="round"/><path d="M46.2 426 C47.3 426.6 47.8 427.3 47.6 428" fill="none" stroke="#2040f4" stroke-width="1.5" stroke-linecap="round"/><circle cx="45.3" cy="418.3" r="1.1" fill="#f01818"/><circle cx="42" cy="420" r="1.1" fill="#f01818"/><circle cx="36.9" cy="422.5" r="1.1" fill="#f01818"/><circle cx="36.9" cy="426.1" r="1.1" fill="#f01818"/><polyline points="42.00,444.23 41.93,444.08 41.89,443.90 41.89,443.71 41.92,443.52 42.00,443.32 42.13,443.12 42.30,442.95 42.50,442.81 42.75,442.70 43.02,442.64 43.31,442.62 43.62,442.67 43.92,442.77 44.21,442.93 44.47,443.16 44.70,443.43 44.88,443.76 45.00,444.12 45.06,444.52 45.04,444.93 44.95,445.34 44.78,445.75 44.54,446.13 44.22,446.47 43.83,446.75 43.39,446.97 42.90,447.10 42.38,447.16 41.85,447.11 41.33,446.97 40.82,446.74 40.35,446.41 39.94,445.99 39.60,445.49 39.35,444.93 39.19,444.33 39.15,443.69 39.22,443.04 39.41,442.40 39.71,441.79 40.12,441.23 40.64,440.74 41.24,440.35 41.92,440.06 42.65,439.89 43.41,439.85 44.18,439.95 44.93,440.19 45.65,440.56 46.29,441.05 46.85,441.67 47.30,442.38 47.63,443.17 47.81,444.03 47.84,444.91 47.72,445.80 47.43,446.66 47.00,447.48 46.42,448.22 45.70,448.85 44.88,449.35 43.97,449.71 43.00,449.91 41.99,449.94 40.99,449.78 40.01,449.45 39.09,448.95 38.26,448.29 37.56,447.48 36.99,446.55 36.60,445.52 36.39,444.42 36.37,443.30 36.55,442.17 36.93,441.08 37.50,440.06 38.25,439.14 39.15,438.36 40.19,437.74 41.34,437.31 42.55,437.09 43.80,437.07 45.05,437.28 46.25,437.71" fill="none" stroke="#2038f0" stroke-width="1.5" stroke-linecap="round"/><circle cx="46.2521" cy="437.708" r="1.1" fill="#f01818"/><circle cx="43.4" cy="444" r="1" fill="#f01818"/><circle cx="42.2" cy="465.3" r="6.3" fill="none" stroke="#2038f0" stroke-width="1.3"/><line x1="41.8" y1="465.6" x2="46.8" y2="460.8" stroke="#f01818" stroke-width="1" stroke-linecap="round"/><circle cx="41.8" cy="465.6" r="1" fill="#f01818"/><circle cx="46.8" cy="460.8" r="1" fill="#f01818"/><ellipse cx="42.2" cy="486.4" rx="7.8" ry="4" transform="rotate(-45 42.2 486.4)" fill="none" stroke="#2038f0" stroke-width="1.3"/><line x1="42" y1="486.4" x2="48" y2="481" stroke="#f01818" stroke-width="0.9" stroke-linecap="round"/><line x1="42" y1="486.4" x2="45" y2="489.6" stroke="#f01818" stroke-width="0.9" stroke-linecap="round"/><circle cx="48" cy="481" r="0.9" fill="#f01818"/><circle cx="45" cy="489.6" r="0.9" fill="#f01818"/><circle cx="42" cy="486.4" r="0.9" fill="#f01818"/><circle cx="42.2" cy="507.8" r="2.3" fill="#2030e0"/><circle cx="42.2" cy="507.8" r="1" fill="#e01030"/><line x1="36.7" y1="534" x2="47.7" y2="523" stroke="#2038f0" stroke-width="1.5" stroke-linecap="round"/><circle cx="36.7" cy="534" r="1.1" fill="#f01818"/><circle cx="47.7" cy="523" r="1.1" fill="#f01818"/><polygon points="42,543.3 47.7,546.5 47.7,553 42,556.1 36.2,553 36.2,546.5" fill="none" stroke="#2038f0" stroke-width="1.4" stroke-linejoin="round"/><line x1="36.2" y1="553" x2="42" y2="556.1" stroke="#f01818" stroke-width="1.4" stroke-linecap="round"/><line x1="41.8" y1="550" x2="47.7" y2="546.5" stroke="#f01818" stroke-width="1.1" stroke-linecap="round"/><circle cx="41.8" cy="550" r="1" fill="#f01818"/></svg>
<svg style="left:0px;top:0px" width="340" height="687" viewBox="0 0 340 687"><polygon points="122.3,378.5 122.3,393.1 125.6,390.1 128.1,395.5 130.6,394.4 128.2,389.2 132.7,389.2" fill="#ffffff" stroke="#111111" stroke-width="1" stroke-linejoin="round"/></svg>
<div class="abs hdr" style="top:586px"></div>
<div class="t" style="left:15.70px;top:590.92px;font-size:13.33px;font-weight:bold;color:#fff;">Location</div>
<svg style="left:0px;top:0px" width="340" height="687" viewBox="0 0 340 687"><circle cx="301.8" cy="596.9" r="6.5" fill="#fbf3ef"/><path d="M299.2 593.9 L301.8 596.5 L304.4 593.9 M299.2 597.5 L301.8 600.1 L304.4 597.5" stroke="#e8794f" stroke-width="1.5" fill="none" stroke-linecap="round" stroke-linejoin="round"/></svg>
<div class="abs" style="left:471px;top:659px;width:727px;height:1px;background:#d8d6d3"></div>
<div class="abs" style="left:471px;top:660px;width:727px;height:1px;background:#f9f9f8"></div>
<div class="abs" style="left:328px;top:629px;width:144px;height:31px;border:1px solid #bcb8b4;border-top:none;border-radius:0 0 4px 4px;background:linear-gradient(#f4f3f2,#fcfcfb);box-sizing:border-box"></div>
<svg style="left:0px;top:0px" width="600" height="687" viewBox="0 0 600 687"><defs><linearGradient id="fcr" x1="0" y1="0" x2="1" y2="0"><stop offset="0" stop-color="#e8541c"/><stop offset="1" stop-color="#d81a1a"/></linearGradient></defs><path d="M335 637.6 L341.6 637.6 L341.6 640 L337.7 640 L337.7 642.2 L340.4 642.2 L340.4 644.4 L337.7 644.4 L337.7 648.7 L335 648.7 Z" fill="url(#fcr)"/><polygon points="349.152,644.616 349.152,645.984 347.592,646.15 347.229,647.027 348.214,648.247 347.247,649.214 346.027,648.229 345.15,648.592 344.984,650.152 343.616,650.152 343.45,648.592 342.573,648.229 341.353,649.214 340.386,648.247 341.371,647.027 341.008,646.15 339.448,645.984 339.448,644.616 341.008,644.45 341.371,643.573 340.386,642.353 341.353,641.386 342.573,642.371 343.45,642.008 343.616,640.448 344.984,640.448 345.15,642.008 346.027,642.371 347.247,641.386 348.214,642.353 347.229,643.573 347.592,644.45" fill="#1b2b8a"/><circle cx="344.3" cy="645.3" r="1.7" fill="#f6f6f6"/></svg>
<div class="t" style="left:357.00px;top:638.02px;font-size:13.33px;transform:scaleX(1.0049);">Unnamed : 1*</div>
<svg style="left:0px;top:0px" width="600" height="687" viewBox="0 0 600 687"><path d="M451.4 640.4 L458.6 647.6 M458.6 640.4 L451.4 647.6" stroke="#5c5c5c" stroke-width="3" stroke-linecap="round"/></svg>
<div class="t" style="left:1087.00px;top:667.32px;font-size:13.33px;">60.68 x 38.55 mm</div>
</body></html>
